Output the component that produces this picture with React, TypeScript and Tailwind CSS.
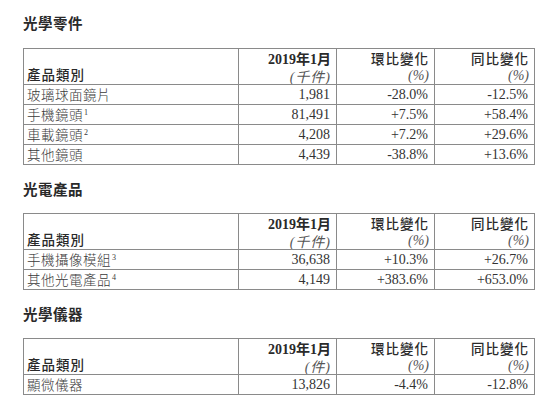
import React from "react";

const serif = "font-['Liberation_Serif','Noto_Sans_CJK_TC',serif]";
const sans = "font-['Noto_Sans_CJK_TC','Noto_Sans',sans-serif]";

type Row = { name: string; sup?: string; v: string; a: string; b: string };

function Sup({ n }: { n: string }) {
  return <span className={`${serif} text-[8px] leading-none relative -top-[5px] ml-[1px]`}>{n}</span>;
}

function DataTable({ unit, rows }: { unit: string; rows: Row[] }) {
  const bd = "border border-[#8a8a8a] p-0";
  const numCell = `${serif} h-[19px] leading-[19px] overflow-hidden text-right pr-[6px] text-[14px] text-[#333]`;
  return (
    <table className="border-collapse table-fixed w-[511px]">
      <colgroup>
        <col className="w-[215px]" />
        <col className="w-[98px]" />
        <col className="w-[98px]" />
        <col className="w-[100px]" />
      </colgroup>
      <thead>
        <tr>
          <th className={bd}>
            <div className={`${sans} h-[35px] flex items-end text-left font-medium text-[13.5px] leading-[18px] text-[#2a2a2a] pl-[3px] pb-[1px] tracking-[1px]`}>
              產品類別
            </div>
          </th>
          <th className={bd}>
            <div className="h-[35px] overflow-hidden text-right pr-[5px] text-[#2a2a2a] leading-[18px]">
              <div className="text-[14px] font-bold whitespace-nowrap">
                <span className={serif}>2019</span>
                <span className={sans}>年</span>
                <span className={serif}>1</span>
                <span className={sans}>月</span>
              </div>
              <div className={`${serif} italic font-normal text-[14px] text-[#555] tracking-[1px]`}>{unit}</div>
            </div>
          </th>
          <th className={bd}>
            <div className="h-[35px] overflow-hidden text-right pr-[5px] text-[#2a2a2a] leading-[18px]">
              <div className={`${sans} text-[13.5px] font-medium tracking-[1px]`}>環比變化</div>
              <div className={`${serif} italic font-normal text-[14px] text-[#555]`}>(%)</div>
            </div>
          </th>
          <th className={bd}>
            <div className="h-[35px] overflow-hidden text-right pr-[5px] text-[#2a2a2a] leading-[18px]">
              <div className={`${sans} text-[13.5px] font-medium tracking-[1px]`}>同比變化</div>
              <div className={`${serif} italic font-normal text-[14px] text-[#555]`}>(%)</div>
            </div>
          </th>
        </tr>
      </thead>
      <tbody>
        {rows.map((r) => (
          <tr key={r.name}>
            <td className={bd}>
              <div className={`${sans} h-[19px] leading-[19px] overflow-hidden font-light text-[13.5px] text-[#3a3a3a] pl-[3px] tracking-[0.5px] whitespace-nowrap`}>
                {r.name}
                {r.sup && <Sup n={r.sup} />}
              </div>
            </td>
            <td className={bd}><div className={numCell}>{r.v}</div></td>
            <td className={bd}><div className={numCell}>{r.a}</div></td>
            <td className={bd}><div className={numCell}>{r.b}</div></td>
          </tr>
        ))}
      </tbody>
    </table>
  );
}

function Title({ children, className = "" }: { children: React.ReactNode; className?: string }) {
  return (
    <div className={`${sans} text-[14.5px] leading-[20px] font-bold text-[#2a2a2a] tracking-[0.5px] ${className}`}>
      {children}
    </div>
  );
}

export default function App() {
  return (
    <div className="w-[556px] h-[406px] bg-white pl-[23px] pt-[13px] overflow-hidden">
      <Title>光學零件</Title>
      <div className="mt-[15px]">
        <DataTable
          unit="(千件)"
          rows={[
            { name: "玻璃球面鏡片", v: "1,981", a: "-28.0%", b: "-12.5%" },
            { name: "手機鏡頭", sup: "1", v: "81,491", a: "+7.5%", b: "+58.4%" },
            { name: "車載鏡頭", sup: "2", v: "4,208", a: "+7.2%", b: "+29.6%" },
            { name: "其他鏡頭", v: "4,439", a: "-38.8%", b: "+13.6%" },
          ]}
        />
      </div>
      <Title className="mt-[14px]">光電產品</Title>
      <div className="mt-[14px]">
        <DataTable
          unit="(千件)"
          rows={[
            { name: "手機攝像模組", sup: "3", v: "36,638", a: "+10.3%", b: "+26.7%" },
            { name: "其他光電產品", sup: "4", v: "4,149", a: "+383.6%", b: "+653.0%" },
          ]}
        />
      </div>
      <Title className="mt-[14px]">光學儀器</Title>
      <div className="mt-[14px]">
        <DataTable
          unit="(件)"
          rows={[{ name: "顯微儀器", v: "13,826", a: "-4.4%", b: "-12.8%" }]}
        />
      </div>
    </div>
  );
}
